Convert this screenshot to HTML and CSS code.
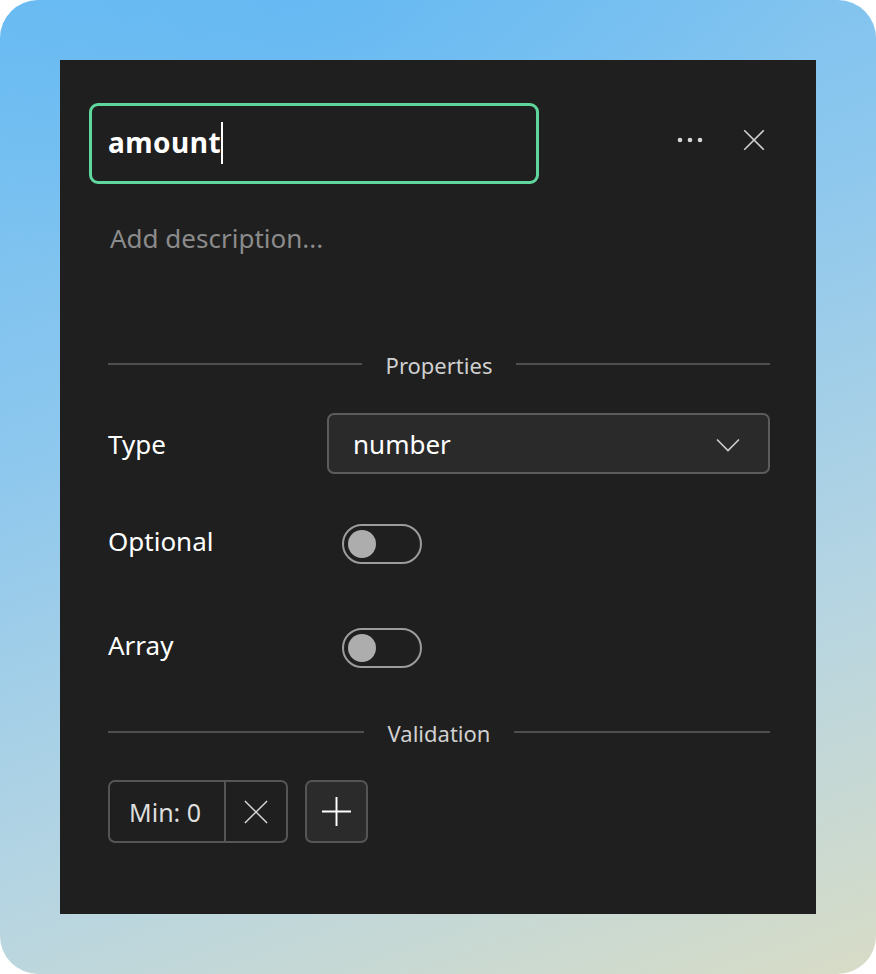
FILE: index.html
```html
<!DOCTYPE html>
<html lang="en">
<head>
<meta charset="utf-8">
<title>Field editor</title>
<link rel="stylesheet" href="styles.css">
</head>
<body>
<div class="frame">
  <div class="panel">
    <div class="header">
      <div class="name-input"><span class="name-text">amount</span><span class="caret"></span></div>
      <div class="header-actions">
        <button class="icon-btn" aria-label="More">
          <svg width="32" height="32" viewBox="0 0 32 32"><circle cx="6" cy="16" r="2.3" fill="#d6d6d6"/><circle cx="16" cy="16" r="2.3" fill="#d6d6d6"/><circle cx="26" cy="16" r="2.3" fill="#d6d6d6"/></svg>
        </button>
        <button class="icon-btn" aria-label="Close">
          <svg width="32" height="32" viewBox="0 0 32 32"><path d="M4 4 L28 28 M28 4 L4 28" stroke="#cfcfcf" stroke-width="2" fill="none"/></svg>
        </button>
      </div>
    </div>
    <div class="description">Add description...</div>

    <div class="divider"><span class="rule"></span><span class="divider-label">Properties</span><span class="rule"></span></div>

    <div class="row row-type">
      <div class="label label-type">Type</div>
      <div class="select">
        <span class="select-value">number</span>
        <svg class="chevron" width="24" height="14" viewBox="0 0 24 14"><path d="M1 1.5 L12 12.5 L23 1.5" stroke="#cfcfcf" stroke-width="1.6" fill="none"/></svg>
      </div>
    </div>

    <div class="row row-optional">
      <div class="label label-toggle">Optional</div>
      <div class="toggle"><span class="knob"></span></div>
    </div>

    <div class="row row-array">
      <div class="label label-toggle">Array</div>
      <div class="toggle"><span class="knob"></span></div>
    </div>

    <div class="divider divider-validation"><span class="rule"></span><span class="divider-label">Validation</span><span class="rule"></span></div>

    <div class="chips">
      <div class="chip">
        <span class="chip-text">Min: 0</span>
        <span class="chip-remove">
          <svg width="26" height="26" viewBox="0 0 26 26"><path d="M1 1 L25 25 M25 1 L1 25" stroke="#d8d8d8" stroke-width="1.6" fill="none"/></svg>
        </span>
      </div>
      <div class="add-btn">
        <svg width="30" height="30" viewBox="0 0 30 30"><path d="M15 0 V30 M0 15 H30" stroke="#ffffff" stroke-width="2" fill="none"/></svg>
      </div>
    </div>
  </div>
</div>
</body>
</html>
```

FILE: styles.css
```css
* { box-sizing: border-box; }

html, body {
  margin: 0;
  padding: 0;
  background: #ffffff;
}

body {
  font-family: "Noto Sans", "Open Sans", sans-serif;
}

.frame {
  width: 876px;
  height: 974px;
  border-radius: 38px;
  padding: 60px;
  background:
    radial-gradient(ellipse 520px 300px at 300px 0px, rgba(90, 180, 244, 0.55), rgba(90, 180, 244, 0) 100%),
    linear-gradient(160deg, #6dbdf2 0%, #8cc7ee 35%, #b6d5e2 70%, #d8dcc6 100%);
  overflow: hidden;
}

.panel {
  width: 756px;
  height: 854px;
  background: #1f1f1f;
  padding: 43px 46px 0 48px;
  display: flex;
  flex-direction: column;
}

.header {
  display: flex;
  align-items: center;
  height: 81px;
  margin-left: -19px;
}

.name-input {
  width: 450px;
  height: 81px;
  border: 3px solid #5fd69c;
  border-radius: 9px;
  padding-left: 16px;
  padding-bottom: 4px;
  display: flex;
  align-items: center;
}

.name-text {
  font-size: 28px;
  font-weight: 700;
  color: #ffffff;
  letter-spacing: 0.5px;
}

.caret {
  display: inline-block;
  width: 2px;
  height: 42px;
  background: #ffffff;
  margin-top: 2px;
}

.header-actions {
  margin-left: auto;
  display: flex;
  gap: 32px;
  margin-bottom: 7px;
}

.icon-btn {
  width: 32px;
  height: 32px;
  padding: 0;
  border: 0;
  background: transparent;
  display: flex;
  align-items: center;
  justify-content: center;
}

.icon-btn svg { display: block; }

.header-actions .icon-btn:last-child svg { width: 26px; height: 26px; }

.description {
  margin-top: 34px;
  height: 40px;
  line-height: 40px;
  font-size: 26px;
  color: #8b8b8b;
  padding-left: 2px;
}

.divider {
  margin-top: 96px;
  height: 20px;
  display: flex;
  align-items: center;
  gap: 24px;
}

.divider-validation { margin-top: 54px; }

.rule {
  flex: 1;
  height: 2px;
  background: #4e4e4e;
}

.divider-label {
  font-size: 22px;
  line-height: 20px;
  color: #d0d0d0;
  padding-top: 1px;
}

.row {
  display: flex;
  align-items: center;
}

.row-type {
  margin-top: 39px;
  height: 61px;
}

.row-optional {
  margin-top: 50px;
  height: 40px;
}

.row-array {
  margin-top: 64px;
  height: 40px;
}

.label {
  font-size: 26px;
  color: #ffffff;
}

.label-type { width: 219px; }
.label-toggle { width: 234px; margin-top: -7px; }

.select {
  flex: 1;
  height: 61px;
  background: #2a2a2a;
  border: 2px solid #5c5c5c;
  border-radius: 7px;
  padding: 0 28px 0 24px;
  display: flex;
  align-items: center;
  justify-content: space-between;
}

.select-value {
  font-size: 26px;
  color: #ffffff;
}

.chevron { display: block; margin-top: 2px; }

.toggle {
  width: 80px;
  height: 40px;
  border: 2px solid #9c9c9c;
  border-radius: 20px;
  padding: 4px;
  display: flex;
  align-items: center;
}

.knob {
  width: 28px;
  height: 28px;
  border-radius: 50%;
  background: #adadad;
}

.chips {
  margin-top: 38px;
  display: flex;
  gap: 17px;
  height: 63px;
}

.chip {
  display: flex;
  height: 63px;
  border: 2px solid #555555;
  border-radius: 7px;
}

.chip-text {
  width: 116px;
  padding-left: 19px;
  display: flex;
  align-items: center;
  font-size: 25px;
  color: #dedede;
  border-right: 2px solid #555555;
}

.chip-remove {
  width: 60px;
  display: flex;
  align-items: center;
  justify-content: center;
}

.chip-remove svg { width: 24px; height: 24px; }

.add-btn {
  width: 63px;
  height: 63px;
  background: #2b2b2b;
  border: 2px solid #555555;
  border-radius: 7px;
  display: flex;
  align-items: center;
  justify-content: center;
}

.add-btn svg { width: 29px; height: 29px; }
```
